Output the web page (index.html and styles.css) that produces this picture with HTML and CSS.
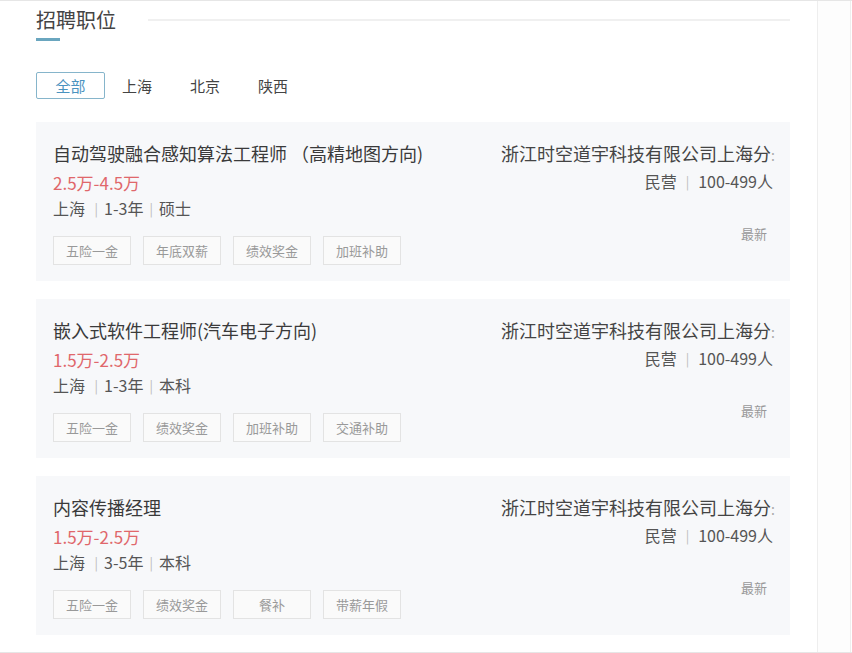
FILE: index.html
```html
<!DOCTYPE html>
<html>
    <head>
        <meta charset="utf-8">
        <title>招聘职位</title>
        <link rel="stylesheet" href="styles.css">
    </head>
    <body>
        <div class="frame">
        <div class="main">
            <div class="head">
                <div class="head-title">招聘职位</div>
                <div class="head-line"></div>
            </div>
            <div class="head-bar"></div>

            <div class="tabs">
                <div class="tab active">全部</div>
                <div class="tab">上海</div>
                <div class="tab">北京</div>
                <div class="tab">陕西</div>
            </div>

            <div class="job">
                <div class="job-left">
                    <div class="job-name">自动驾驶融合感知算法工程师 （高精地图方向)</div>
                    <div class="job-salary">2.5万-4.5万</div>
                    <div class="job-meta">上海 <span class="sep">|</span>1-3年<span class="sep">|</span>硕士</div>
                    <div class="tags">
                        <span class="tag">五险一金</span>
                        <span class="tag">年底双薪</span>
                        <span class="tag">绩效奖金</span>
                        <span class="tag">加班补助</span>
                    </div>
                </div>
                <div class="job-right">
                    <div class="company">浙江时空道宇科技有限公司上海分<span class="cut">:</span></div>
                    <div class="company-meta">民营<span class="sep wide">|</span>100-499人</div>
                    <div class="job-new">最新</div>
                </div>
            </div>

            <div class="job">
                <div class="job-left">
                    <div class="job-name">嵌入式软件工程师(汽车电子方向)</div>
                    <div class="job-salary">1.5万-2.5万</div>
                    <div class="job-meta">上海 <span class="sep">|</span>1-3年<span class="sep">|</span>本科</div>
                    <div class="tags">
                        <span class="tag">五险一金</span>
                        <span class="tag">绩效奖金</span>
                        <span class="tag">加班补助</span>
                        <span class="tag">交通补助</span>
                    </div>
                </div>
                <div class="job-right">
                    <div class="company">浙江时空道宇科技有限公司上海分<span class="cut">:</span></div>
                    <div class="company-meta">民营<span class="sep wide">|</span>100-499人</div>
                    <div class="job-new">最新</div>
                </div>
            </div>

            <div class="job">
                <div class="job-left">
                    <div class="job-name">内容传播经理</div>
                    <div class="job-salary">1.5万-2.5万</div>
                    <div class="job-meta">上海 <span class="sep">|</span>3-5年<span class="sep">|</span>本科</div>
                    <div class="tags">
                        <span class="tag">五险一金</span>
                        <span class="tag">绩效奖金</span>
                        <span class="tag">餐补</span>
                        <span class="tag">带薪年假</span>
                    </div>
                </div>
                <div class="job-right">
                    <div class="company">浙江时空道宇科技有限公司上海分<span class="cut">:</span></div>
                    <div class="company-meta">民营<span class="sep wide">|</span>100-499人</div>
                    <div class="job-new">最新</div>
                </div>
            </div>
        </div>
        <div class="side"></div>
        </div>
    </body>
</html>
```

FILE: styles.css
```css
html, body {
    margin: 0;
    padding: 0;
    background: #fff;
}

body {
    font-family: "Noto Sans CJK SC", "Noto Sans", sans-serif;
    color: #333;
}

.frame {
    display: flex;
    height: 651px;
    border-top: 1px solid #e6e6e6;
    border-bottom: 1px solid #e6e6e6;
    overflow: hidden;
}

.main {
    width: 818px;
    padding-left: 36px;
    box-sizing: border-box;
    border-right: 1px solid #eeeeee;
}

.side {
    width: 32px;
    border-right: 1px solid #eeeeee;
    background: #fdfdfd;
}

/* header */
.head {
    display: flex;
    align-items: center;
    width: 754px;
    padding-top: 5px;
}
.head-title {
    font-size: 20px;
    line-height: 28px;
    color: #444;
}
.head-line {
    flex: 1;
    height: 2px;
    margin-left: 32px;
    background: #f0f0f0;
}
.head-bar {
    width: 24px;
    height: 3px;
    margin-top: 4px;
    background: #6aa6bf;
}

/* tabs */
.tabs {
    display: flex;
    margin-top: 31px;
}
.tab {
    width: 68px;
    height: 27px;
    box-sizing: border-box;
    border: 1px solid transparent;
    text-align: center;
    font-size: 15px;
    line-height: 25px;
    color: #444;
}
.tab.active {
    width: 69px;
    margin-right: -2px;
    border-color: #86b5cb;
    border-radius: 2px;
    color: #4b93bf;
}

/* job cards */
.job {
    display: flex;
    justify-content: space-between;
    width: 754px;
    height: 159px;
    box-sizing: border-box;
    margin-top: 23px;
    padding: 18px 15px 0 17px;
    background: #f7f8fa;
}
.job + .job {
    margin-top: 18px;
}

.job-name {
    font-size: 18px;
    line-height: 26px;
    color: #3a3a3a;
}
.job-salary {
    margin-top: 4px;
    font-size: 17px;
    line-height: 26px;
    color: #e0676b;
}
.job-meta {
    font-size: 16px;
    line-height: 24px;
    color: #555;
}
.sep {
    margin: 0 6px;
    font-size: 13px;
    color: #bbb;
    position: relative;
    top: -1px;
}
.sep.wide {
    margin: 0 9px;
}

.tags {
    display: flex;
    gap: 12px;
    margin-top: 14px;
}
.tag {
    width: 78px;
    height: 29px;
    box-sizing: border-box;
    border: 1px solid #e3e3e3;
    background: #fafafa;
    text-align: center;
    font-size: 13px;
    line-height: 27px;
    color: #999;
}

.job-right {
    display: flex;
    flex-direction: column;
    align-items: flex-end;
}
.company {
    height: 26px;
    white-space: nowrap;
    font-size: 18px;
    line-height: 26px;
    color: #444;
}
.cut {
    color: #aaa;
    font-size: 14px;
    line-height: 0;
}
.company-meta {
    margin-top: 2px;
    padding-right: 2px;
    font-size: 16px;
    line-height: 26px;
    color: #555;
}
.job-new {
    margin-top: 28px;
    padding-right: 8px;
    font-size: 13px;
    line-height: 20px;
    color: #999;
}
```
